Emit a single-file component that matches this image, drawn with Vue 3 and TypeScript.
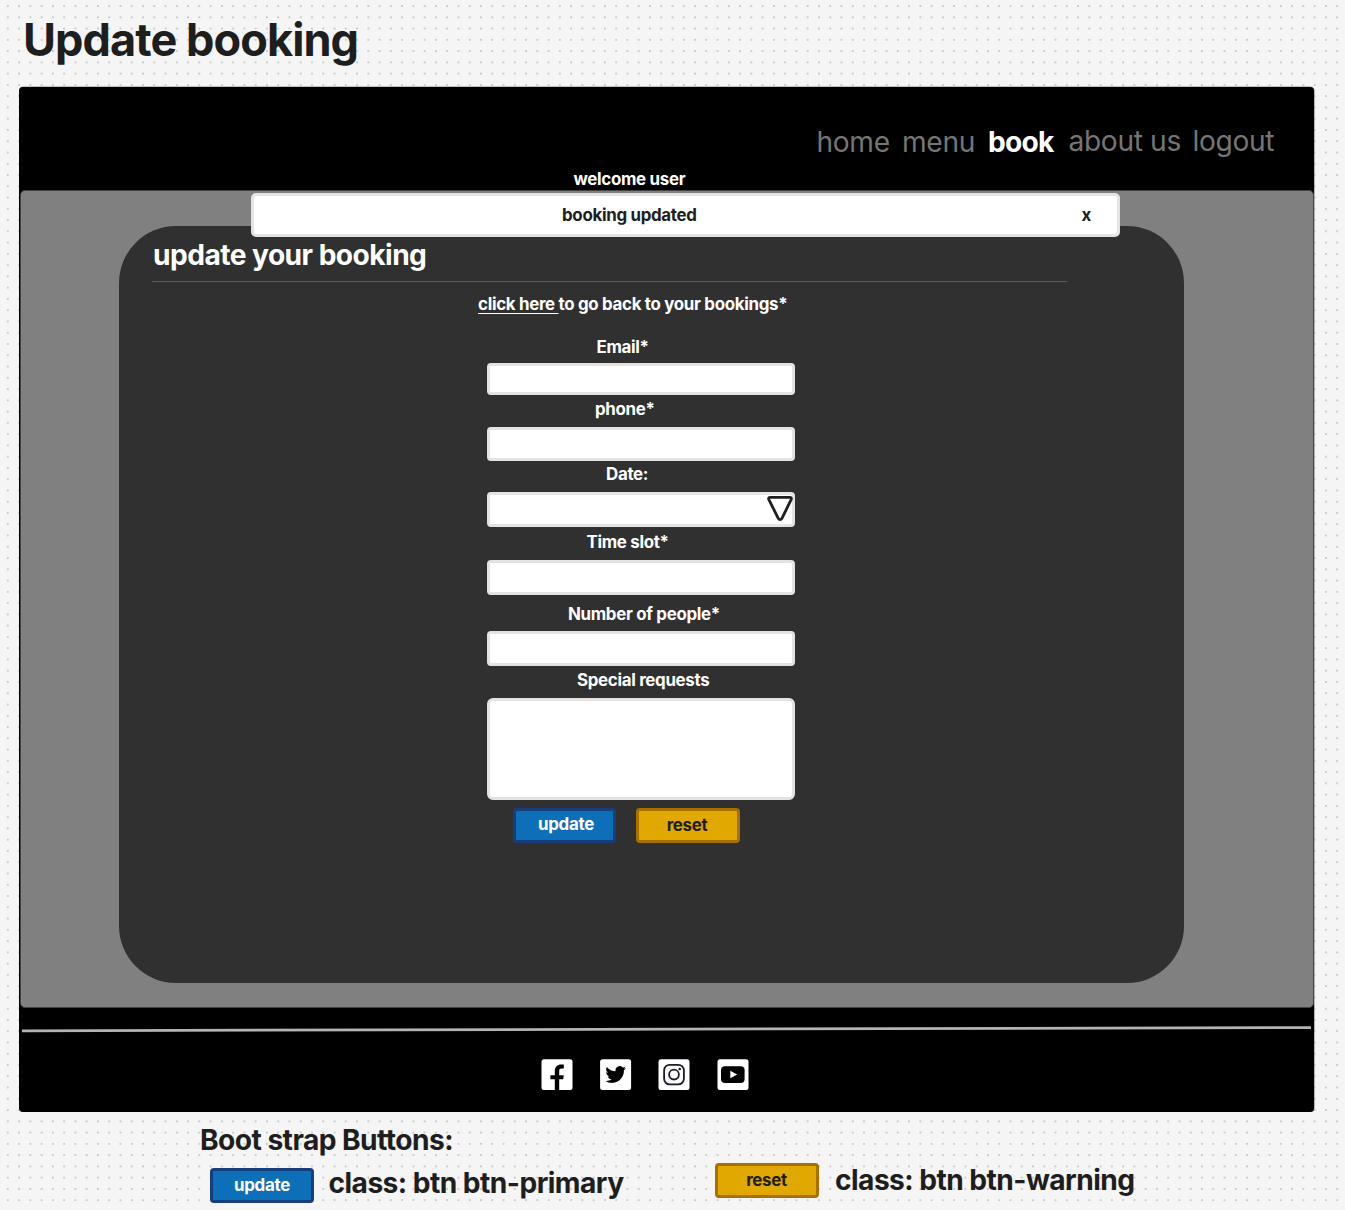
<script setup lang="ts">
interface NavItem {
  id: string
  label: string
  active?: boolean
}

interface Field {
  id: string
  label: string
  kind: 'input' | 'select' | 'textarea'
}

const navItems: NavItem[] = [
  { id: 'home', label: 'home' },
  { id: 'menu', label: 'menu' },
  { id: 'book', label: 'book', active: true },
  { id: 'about', label: 'about us' },
  { id: 'logout', label: 'logout' },
]

const fields: Field[] = [
  { id: 'email', label: 'Email*', kind: 'input' },
  { id: 'phone', label: 'phone*', kind: 'input' },
  { id: 'date', label: 'Date:', kind: 'select' },
  { id: 'time', label: 'Time slot*', kind: 'input' },
  { id: 'people', label: 'Number of people*', kind: 'input' },
  { id: 'requests', label: 'Special requests', kind: 'textarea' },
]
</script>

<template>
  <div class="page">
    <h1 class="title">Update booking</h1>

    <div class="frame">
      <header class="top">
        <nav class="nav">
          <a v-for="n in navItems" :key="n.id" class="nav-item" :class="[n.id, { active: n.active }]">{{ n.label }}</a>
        </nav>
        <p class="small welcome">welcome user</p>
      </header>

      <main class="band">
        <div class="alert">
          <span class="small alert-text">booking updated</span>
          <span class="small alert-close">x</span>
        </div>

        <section class="card">
          <h2 class="large heading">update your booking</h2>
          <p class="small back"><a class="link">click here </a>to go back to your bookings*</p>

          <form class="form" @submit.prevent>
            <div v-for="f in fields" :key="f.id" class="field" :class="f.id">
              <label class="small label">{{ f.label }}</label>
              <div class="box" :class="f.kind">
                <svg v-if="f.kind === 'select'" class="caret" width="26" height="26" viewBox="0 0 26 26">
                  <path d="M3.2 2.4H22.8Q25 2.4 24.1 4.6L15.2 22.9Q13.1 26.2 11 22.9L1.9 4.6Q1 2.4 3.2 2.4Z" fill="#fff" stroke="#1e1e1e" stroke-width="2.8" stroke-linejoin="round" />
                </svg>
              </div>
            </div>
            <div class="actions">
              <button class="small btn btn-primary">update</button>
              <button class="small btn btn-warning">reset</button>
            </div>
          </form>
        </section>
      </main>

      <footer class="foot">
        <svg class="rule" width="1293" height="8" viewBox="0 0 1293 8">
          <line x1="2" y1="5.8" x2="1291" y2="2.6" stroke="#b3b3b3" stroke-width="2.8" />
        </svg>
        <div class="social">
          <svg width="32" height="32" viewBox="0 0 32 32">
            <rect x=".5" y=".3" width="31" height="30.7" rx="2.5" fill="#fff" />
            <path d="M13.8 31V20.2H9.4V16.3H13.8V12.2C13.8 7.8 16.3 5.4 20.2 5.4H22.8V9.5H20.8C18.9 9.5 18.2 10.3 18.2 12V16.3H22.7L22.2 20.2H18.2V31Z" />
          </svg>
          <svg width="32" height="32" viewBox="0 0 32 32">
            <rect x=".1" y=".3" width="31" height="30.7" rx="2.5" fill="#fff" />
            <path transform="translate(5.4 5.2) scale(.86)" d="M24 4.56a9.8 9.8 0 0 1-2.83.77 4.93 4.93 0 0 0 2.17-2.72 9.9 9.9 0 0 1-3.13 1.2 4.92 4.92 0 0 0-8.38 4.48A13.97 13.97 0 0 1 1.67 3.15 4.93 4.93 0 0 0 3.2 9.72 4.9 4.9 0 0 1 .96 9.1v.06a4.93 4.93 0 0 0 3.95 4.83 4.9 4.9 0 0 1-2.22.08 4.93 4.93 0 0 0 4.6 3.42A9.87 9.87 0 0 1 0 19.54a13.94 13.94 0 0 0 7.55 2.21c9.14 0 14.3-7.72 13.99-14.65A10 10 0 0 0 24 4.56z" />
          </svg>
          <svg width="32" height="32" viewBox="0 0 32 32">
            <rect x=".5" y=".3" width="31" height="30.7" rx="2.5" fill="#fff" />
            <g fill="none" stroke="#1c1c24" stroke-width="1.8">
              <rect x="6.1" y="5.8" width="19.8" height="19.6" rx="5.6" />
              <circle cx="16" cy="15.6" r="4.9" />
            </g>
            <circle cx="21.7" cy="10" r="1.3" fill="#1c1c24" />
          </svg>
          <svg width="32" height="32" viewBox="0 0 32 32">
            <rect x=".5" y=".3" width="31" height="30.7" rx="2.5" fill="#fff" />
            <rect x="4" y="7.2" width="23.6" height="16.8" rx="4" />
            <path d="M13.3 11.8L20.2 15.5L13.3 19.3Z" fill="#fff" />
          </svg>
        </div>
      </footer>
    </div>

    <section class="legend">
      <h2 class="large legend-title">Boot strap Buttons:</h2>
      <div class="legend-row">
        <span class="small btn btn-primary">update</span>
        <span class="large name-primary">class: btn btn-primary</span>
        <span class="small btn btn-warning">reset</span>
        <span class="large name-warning">class: btn btn-warning</span>
      </div>
    </section>
  </div>
</template>

<style>
body {
  margin: 0;
  overflow: hidden;
}
</style>

<style scoped>
.page {
  box-sizing: border-box;
  width: 1345px;
  height: 1210px;
  overflow: hidden;
  padding: 13px 0 0 19px;
  font-family: Inter, "Liberation Sans", sans-serif;
  color: #1e1e1e;
  background-color: #f5f5f5;
  background-image: radial-gradient(circle at 50% 50%, #b0b0b0 0.45px, rgba(176, 176, 176, 0) 1.02px);
  background-size: 11.266px 11.266px;
  background-position: 2.2px 0.4px;
}
h1, h2, p {
  margin: 0;
}
.title {
  margin-left: 4px;
  height: 74px;
  font-size: 45.07px;
  line-height: 54px;
  font-weight: 700;
  letter-spacing: -0.0205em;
  white-space: nowrap;
}
.large {
  font-size: 28.17px;
  line-height: 34px;
  font-weight: 700;
  letter-spacing: -0.0195em;
  white-space: nowrap;
}
.small {
  font-size: 16.9px;
  line-height: 20px;
  font-weight: 700;
  letter-spacing: -0.0185em;
  white-space: nowrap;
}
.frame {
  width: 1295px;
  height: 1025px;
  background: #000;
  border-radius: 4px;
  box-shadow: 0 -1px 0 -0.5px #8a8a8a, 0.5px 0 0 0 #777;
}
.top {
  box-sizing: border-box;
  height: 103px;
  padding-top: 37px;
}
.nav {
  display: flex;
  height: 34px;
  padding-left: 797.5px;
  font-size: 28.17px;
  line-height: 34px;
  font-weight: 400;
  letter-spacing: -0.35px;
  color: #757575;
  white-space: nowrap;
}
.home { width: 85.5px; }
.menu { width: 86px; }
.book { width: 80.5px; }
.about { width: 124px; }
.home, .menu, .book {
  margin-top: 1px;
}
.nav-item.active {
  color: #fff;
  font-weight: 700;
  letter-spacing: -0.026em;
}
.welcome {
  margin: 11px 0 0 554.5px;
  color: #fff;
}
.band {
  box-sizing: border-box;
  width: 1294px;
  height: 818px;
  margin-left: 1px;
  padding-top: 2px;
  background: #808080;
  border: 1px solid #444;
  border-radius: 5px;
}
.alert {
  position: relative;
  z-index: 1;
  box-sizing: border-box;
  display: flex;
  align-items: center;
  width: 869px;
  height: 44px;
  margin-left: 230px;
  background: #fff;
  border: 3px solid #e3e3e3;
  border-radius: 5px;
}
.alert-text {
  width: 519.5px;
  padding-left: 308px;
}
.card {
  box-sizing: border-box;
  width: 1065px;
  height: 757px;
  margin: -11px 0 0 98px;
  padding: 12px 0 0 33px;
  background: #303030;
  border-radius: 57px;
  color: #fff;
}
.heading {
  box-sizing: border-box;
  width: 915px;
  height: 44px;
  padding-left: 1px;
  border-bottom: 1px solid #5c5c5c;
}
.back {
  margin: 12px 0 0 326px;
}
.link {
  text-decoration: underline;
  text-decoration-thickness: 1px;
  text-underline-offset: 3px;
  white-space: pre;
}
.form {
  width: 308px;
  margin: 23px 0 0 335px;
}
.box {
  box-sizing: border-box;
  height: 35px;
  background: #fff;
  border: 3px solid #e3e3e3;
  border-radius: 4px;
}
.label {
  display: block;
}
.email .label { margin: 0 0 6px 109.5px; }
.phone .label { margin: 4px 0 8px 108px; }
.date .label { margin: 3px 0 8px 119px; }
.time .label { margin: 5px 0 8px 99.5px; }
.people .label { margin: 9px 0 7px 81px; }
.requests .label { margin: 4px 0 8px 90px; }
.email .box { height: 32px; }
.phone .box { height: 34px; }
.box.textarea {
  height: 102px;
  border-radius: 6px;
}
.box.select {
  display: flex;
  justify-content: flex-end;
}
.caret {
  margin-right: -1px;
}
.btn {
  box-sizing: border-box;
  flex: none;
  width: 104px;
  height: 35px;
  padding: 0;
  border: 3px solid;
  border-radius: 4px;
  font-family: inherit;
  text-align: center;
}
.btn-primary {
  color: #fff;
  background: #0d6fb8;
  border-color: #173e7c;
}
.btn-warning {
  color: #1e1e1e;
  background: #e0a800;
  border-color: #a87000;
}
.actions {
  display: flex;
  gap: 20px;
  margin: 8px 0 0 26px;
}
.actions .btn-primary {
  width: 103px;
  padding: 0 0 3px 3px;
}
.actions .btn-warning {
  padding: 0 2px 1px 0;
}
.foot {
  padding-top: 17px;
}
.rule {
  display: block;
  margin-left: 1px;
}
.social {
  display: flex;
  gap: 26.6px;
  margin: 26px 0 0 522px;
}
.legend-title {
  margin: 11px 0 0 181px;
}
.legend-row {
  display: flex;
  align-items: flex-start;
  height: 40px;
  margin: 6px 0 0 191px;
}
.legend-row .btn {
  line-height: 29px;
}
.legend-row .btn-primary {
  margin-top: 5px;
}
.name-primary {
  width: 386px;
  margin: 3px 0 0 14.5px;
}
.name-warning {
  margin-left: 16.5px;
}
</style>
